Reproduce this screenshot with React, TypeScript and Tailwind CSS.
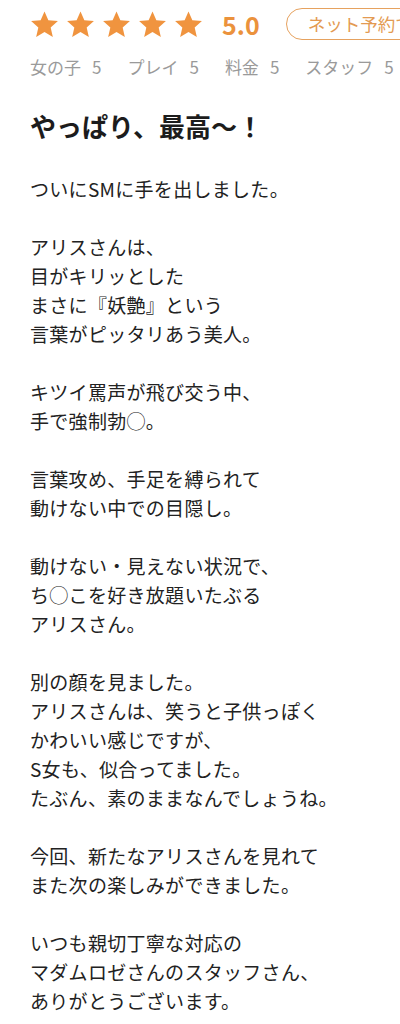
const subRatings = [
  { label: '女の子', score: 5 },
  { label: 'プレイ', score: 5 },
  { label: '料金', score: 5 },
  { label: 'スタッフ', score: 5 },
]

const body = `ついにSMに手を出しました。

アリスさんは、
目がキリッとした
まさに『妖艶』という
言葉がピッタリあう美人。

キツイ罵声が飛び交う中、
手で強制勃◯。

言葉攻め、手足を縛られて
動けない中での目隠し。

動けない・見えない状況で、
ち◯こを好き放題いたぶる
アリスさん。

別の顔を見ました。
アリスさんは、笑うと子供っぽく
かわいい感じですが、
S女も、似合ってました。
たぶん、素のままなんでしょうね。

今回、新たなアリスさんを見れて
また次の楽しみができました。

いつも親切丁寧な対応の
マダムロゼさんのスタッフさん、
ありがとうございます。`

function Star() {
  return (
    <svg viewBox="0 0 24 24" className="w-[29px] h-[29px] shrink-0">
      <path
        d="M12 1.2l3.2 7.3 7.9.7-6 5.3 1.8 7.8L12 18.2l-6.9 4.1 1.8-7.8-6-5.3 7.9-.7z"
        fill="#f0943f"
      />
    </svg>
  )
}

export default function App() {
  return (
    <div
      className="w-[400px] overflow-hidden bg-white px-[30px] pt-2 pb-4"
      style={{ fontFamily: '"Noto Sans CJK JP", "Noto Sans", sans-serif' }}
    >
      <div className="flex items-center whitespace-nowrap h-8">
        <div className="flex items-center gap-[7px]">
          {[0, 1, 2, 3, 4].map((i) => (
            <Star key={i} />
          ))}
        </div>
        <span className="ml-[19px] text-[25px] font-bold text-[#eb923c] leading-none">5.0</span>
        <div className="ml-[26px] shrink-0 h-8 flex items-center rounded-full border border-[#e6a25f] pl-[21px] pr-5 text-[17.5px] text-[#e39a52]">
          ネット予約で口コミ投稿
        </div>
      </div>

      <div className="mt-[13px] flex items-center whitespace-nowrap text-[17px] text-[#9a9a9a] leading-7">
        {subRatings.map((r, i) => (
          <span key={r.label} className={i > 0 ? 'ml-[26px]' : ''}>
            {r.label}
            <span className="ml-[11px]">{r.score}</span>
          </span>
        ))}
      </div>

      <h2 className="mt-[29px] text-[26px] font-bold text-[#1c1c1c] leading-8">
        やっぱり、最高〜！
      </h2>

      <p className="mt-[32px] whitespace-pre-line text-[19px] tracking-[0.3px] leading-[29px] text-[#222]">
        {body}
      </p>
    </div>
  )
}
